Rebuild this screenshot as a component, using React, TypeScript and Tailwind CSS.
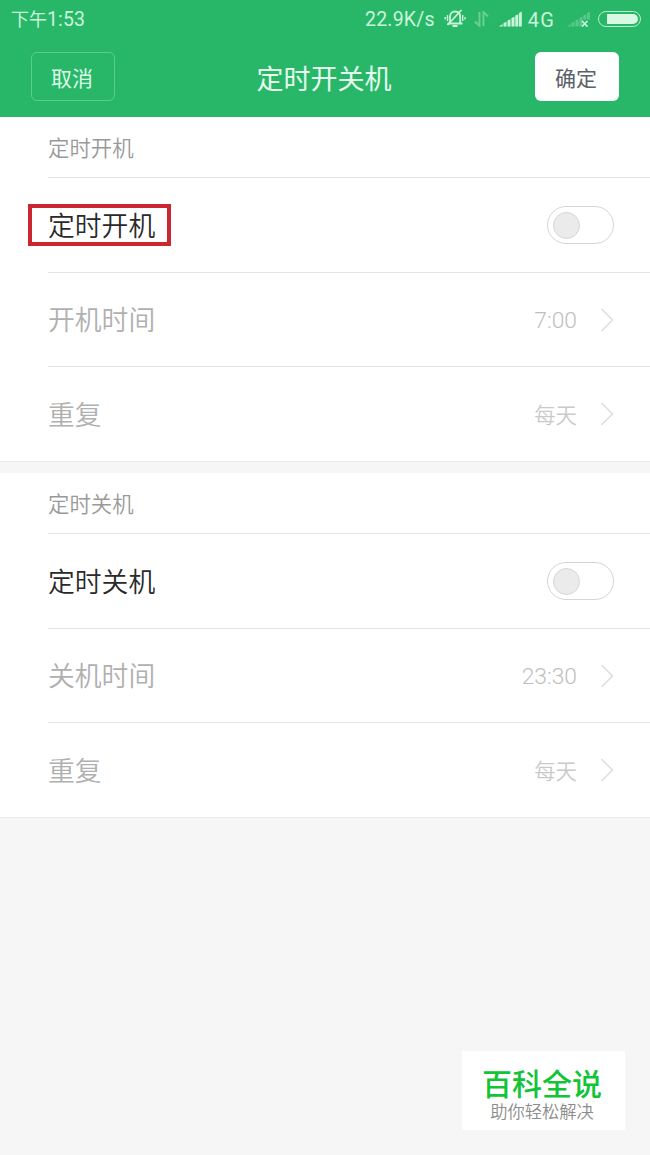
import React from 'react';

const sections = [
  {
    title: '定时开机',
    toggle: '定时开机',
    highlighted: true,
    rows: [
      { label: '开机时间', value: '7:00', isTime: true },
      { label: '重复', value: '每天', isTime: false }
    ]
  },
  {
    title: '定时关机',
    toggle: '定时关机',
    highlighted: false,
    rows: [
      { label: '关机时间', value: '23:30', isTime: true },
      { label: '重复', value: '每天', isTime: false }
    ]
  }
];

const StatusBar = () => (
  <div className="flex h-[38px] items-center pl-[11px] pr-[9px] text-[#c9f5d9]">
    <span className="text-[18px] leading-none">
      下午<span className="font-['Roboto'] text-[19.5px] tracking-[0.1px]">1:53</span>
    </span>
    <span className="ml-auto pt-[2px] font-['Roboto'] text-[19.5px] leading-none tracking-[0.2px]">22.9K/s</span>

    {/* Muted bell */}
    <svg className="ml-[9px] h-[20px] w-[22px]" viewBox="0 0 22 20" fill="none" stroke="currentColor" strokeWidth="1.8">
      <path d="M3.500 14.500h15M6 14V8C6 4.500 8 2.500 11 2.500s5.200 2 5.200 5.500v6M8.500 17h5" />
      <path d="M3.500 6v6M1.200 8v2.500M18.700 6v6M21 8v2.500" strokeWidth="1.400" />
      <path d="M3.500 16L17.500 1" />
    </svg>

    {/* Data transfer arrows */}
    <svg className="ml-[8px] h-[16px] w-[15px] opacity-40" viewBox="0 0 15 16" fill="none" stroke="currentColor" strokeWidth="2">
      <path d="M5.500 1v14L1 10.500M9.500 15V1L14 5.500" />
    </svg>

    <svg className="ml-[10px] h-[16px] w-[23px]" viewBox="0 0 23 16" fill="currentColor">
      <path d="M0 15.500L3.500 13v2.500zM4.500 12l3-1.200v4.700h-3zM8.500 9.500l3-1.300v7.300h-3zM12.500 7l3-1.200v9.700h-3zM16.300 4.500l3-1.200v12.200h-3zM20 2l2.800-1.500v15H20z" />
    </svg>
    <span className="ml-[6px] pt-px font-['Roboto'] text-[20px] leading-none tracking-[1.2px]">4G</span>

    <svg className="ml-[12px] h-[16px] w-[23px]" viewBox="0 0 23 16" fill="currentColor">
      <path
        d="M0 15.500L3.500 13v2.500zM4.500 12l3-1.200v4.700h-3zM8.500 9.500l3-1.300v7.300h-3zM12.500 7l3-1.200v9.700h-3zM16.300 4.500l3-1.200v5.200h-3zM20 2l2.800-1.500v8H20z"
        opacity="0.3"
      />
      <path d="M15 10l5.500 5.500M20.500 10L15 15.500" stroke="currentColor" strokeWidth="1.700" />
    </svg>

    {/* Battery */}
    <div className="ml-[8px] flex h-[16px] w-[43px] justify-end rounded-full border-[1.5px] border-[#b5efc9] p-[2px]">
      <div className="h-full w-[31px] rounded-r-full bg-[#d8f8e3]" />
    </div>
  </div>
);

const Chevron = () => (
  <svg className="ml-[23px] h-[24px] w-[14px]" viewBox="0 0 14 24" fill="none" stroke="#dcdcdc" strokeWidth="1.4">
    <path d="M1.500 1L12.500 12 1.500 23" />
  </svg>
);

const App = () => {
  return (
    <div className="flex h-[1155px] w-[650px] flex-col bg-[#f6f6f6] font-['Noto_Sans_CJK_SC',sans-serif]">
      <header className="h-[117px] bg-[#28b769]">
        <StatusBar />
        <div className="flex items-center justify-between px-[31px] pt-[14px]">
          <button className="h-[49px] w-[84px] rounded-md border border-[#5dcd8f] pr-[2px] pt-px text-[21px] leading-none text-[#dcfbe7]">
            取消
          </button>
          <h1 className="pr-[2px] pt-px text-[27px] leading-none text-[#e6fdee]">定时开关机</h1>
          <button className="h-[49px] w-[84px] rounded-md bg-white pr-[2px] pt-px text-[21px] leading-none text-[#5b6168]">
            确定
          </button>
        </div>
      </header>

      {sections.map((section, index) => (
        <section key={index} className="mb-[11px] border-b border-[#ebebeb] bg-white">
          <div className="ml-[48px] flex h-[61px] items-center border-b border-[#e4e4e4] text-[21.400px] font-[350] text-[#999999]">
            {section.title}
          </div>
          <div className="relative ml-[48px] flex h-[95px] items-center justify-between border-b border-[#e4e4e4] pr-[36px]">
            <span className="text-[26.800px] font-[350] text-[#2a2a2a]">{section.toggle}</span>
            {section.highlighted && (
              <div className="absolute left-[-20px] top-[26px] h-[42px] w-[143px] border-4 border-[#cc2630]" />
            )}
            <div className="flex h-[38px] w-[67px] items-center rounded-full border border-[#d6d6d6] pl-[5px]">
              <div className="h-[27px] w-[27px] rounded-full border border-[#d6d6d6] bg-[#ebebeb]" />
            </div>
          </div>
          <div className="ml-[48px] divide-y divide-[#e4e4e4]">
            {section.rows.map((row) => (
              <div key={row.label} className="flex h-[94px] items-center pr-[36px]">
                <span className="text-[26.800px] font-[350] text-[#b0b0b0]">{row.label}</span>
                <span
                  className={
                    row.isTime
                      ? "ml-auto pt-[4px] font-['Roboto'] text-[22.800px] font-light text-[#bebebe]"
                      : 'ml-auto text-[21.400px] font-[350] text-[#cacaca]'
                  }
                >
                  {row.value}
                </span>
                <Chevron />
              </div>
            ))}
          </div>
        </section>
      ))}

      <div className="mb-[25px] ml-auto mr-[25px] mt-auto flex h-[79px] w-[163px] flex-col items-center bg-white pr-[3px] pt-[15px]">
        <div className="text-[30px] font-medium leading-[32px] text-[#12c437]">百科全说</div>
        <div className="mt-[3px] text-[17.300px] font-[350] leading-[20px] text-[#8c8c8c]">助你轻松解决</div>
      </div>
    </div>
  );
};

export default App;
